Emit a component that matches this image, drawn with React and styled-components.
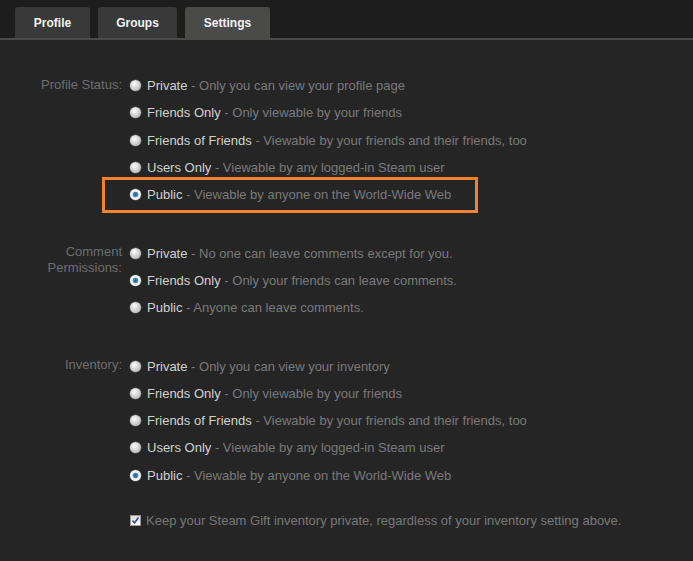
import React from "react";
import styled, { createGlobalStyle } from "styled-components";

const Global = createGlobalStyle`
  html, body { margin: 0; padding: 0; background: #252525; }
  body { font-family: Arial, "Liberation Sans", sans-serif; }
`;

const Page = styled.div`
  width: 693px;
  height: 561px;
  background: #252525;
  overflow: hidden;
`;

const TabBar = styled.div`
  display: flex;
  gap: 8px;
  padding: 7px 0 0 15px;
  height: 31px;
  background: #1d1d1d;
  border-bottom: 2px solid #4a4a4a;
`;

const Tab = styled.div`
  width: ${(p) => p.$w}px;
  height: 31px;
  display: flex;
  align-items: center;
  justify-content: center;
  background: ${(p) => (p.$active ? "#4a4a49" : "#393939")};
  border-radius: 3px 3px 0 0;
  color: #f2f2f2;
  font-weight: bold;
  font-size: 12px;
`;

const Content = styled.div`
  padding-top: 32px;
  display: flex;
  flex-direction: column;
  gap: 31px;
`;

const Section = styled.div`
  display: grid;
  grid-template-columns: 122px 1fr;
  column-gap: 8px;
`;

const Label = styled.div`
  text-align: right;
  color: #6e6e6e;
  font-size: 13px;
  line-height: 16px;
  padding-top: 5px;
`;

const Options = styled.div`
  display: flex;
  flex-direction: column;
`;

const Row = styled.div`
  position: relative;
  height: 27.3px;
  display: flex;
  align-items: center;
  gap: 6px;
  font-size: 13px;
`;

const Radio = styled.span`
  width: 11px;
  height: 11px;
  border-radius: 50%;
  flex: none;
  box-sizing: border-box;
  background: ${(p) =>
    p.$on
      ? "radial-gradient(circle at 50% 50%, #1f5f8c 0, #3f8fc4 2.5px, #f0f0f0 3.2px, #f8f8f8 100%)"
      : "radial-gradient(circle at 40% 35%, #ffffff 0, #e0e0e0 3px, #a8a8a8 100%)"};
  box-shadow: 0 0 0 0.5px #6a6a6a;
`;

const Name = styled.span`
  color: #d2d2d2;
`;

const Desc = styled.span`
  color: #7a7a7a;
`;

const Highlight = styled.div`
  position: absolute;
  left: -28px;
  top: -4px;
  width: 376px;
  height: 36px;
  box-sizing: border-box;
  border: 3px solid #f3822c;
  pointer-events: none;
`;

const CheckRow = styled.div`
  display: flex;
  align-items: center;
  gap: 5px;
  margin-left: 130px;
  margin-top: -7px;
  font-size: 13px;
  color: #787878;
`;

const CheckBox = styled.span`
  width: 11px;
  height: 11px;
  flex: none;
  box-sizing: border-box;
  border: 1px solid #9a9a9a;
  background: linear-gradient(#dcdcdc, #ffffff);
  display: flex;
  align-items: center;
  justify-content: center;
`;

const profileOpts = [
  ["Private", "Only you can view your profile page"],
  ["Friends Only", "Only viewable by your friends"],
  ["Friends of Friends", "Viewable by your friends and their friends, too"],
  ["Users Only", "Viewable by any logged-in Steam user"],
  ["Public", "Viewable by anyone on the World-Wide Web"],
];

const commentOpts = [
  ["Private", "No one can leave comments except for you."],
  ["Friends Only", "Only your friends can leave comments."],
  ["Public", "Anyone can leave comments."],
];

const invOpts = [
  ["Private", "Only you can view your inventory"],
  ["Friends Only", "Only viewable by your friends"],
  ["Friends of Friends", "Viewable by your friends and their friends, too"],
  ["Users Only", "Viewable by any logged-in Steam user"],
  ["Public", "Viewable by anyone on the World-Wide Web"],
];

function Group({ label, opts, selected, highlight }) {
  return (
    <Section>
      <Label>{label}</Label>
      <Options>
        {opts.map(([n, d], i) => (
          <Row key={i}>
            <Radio $on={i === selected} />
            <span>
              <Name>{n}</Name>
              <Desc> - {d}</Desc>
            </span>
            {highlight === i && <Highlight />}
          </Row>
        ))}
      </Options>
    </Section>
  );
}

export default function App() {
  return (
    <Page>
      <Global />
      <TabBar>
        <Tab $w={75}>Profile</Tab>
        <Tab $w={79}>Groups</Tab>
        <Tab $w={85} $active>Settings</Tab>
      </TabBar>
      <Content>
        <Group label="Profile Status:" opts={profileOpts} selected={4} highlight={4} />
        <Group label={<>Comment<br />Permissions:</>} opts={commentOpts} selected={1} />
        <Group label="Inventory:" opts={invOpts} selected={4} />
        <CheckRow>
          <CheckBox>
            <svg width="9" height="9" viewBox="0 0 9 9">
              <path d="M1.5 4.5 L3.5 7 L7.5 1.5" stroke="#34479a" strokeWidth="1.6" fill="none" />
            </svg>
          </CheckBox>
          <span>Keep your Steam Gift inventory private, regardless of your inventory setting above.</span>
        </CheckRow>
      </Content>
    </Page>
  );
}
